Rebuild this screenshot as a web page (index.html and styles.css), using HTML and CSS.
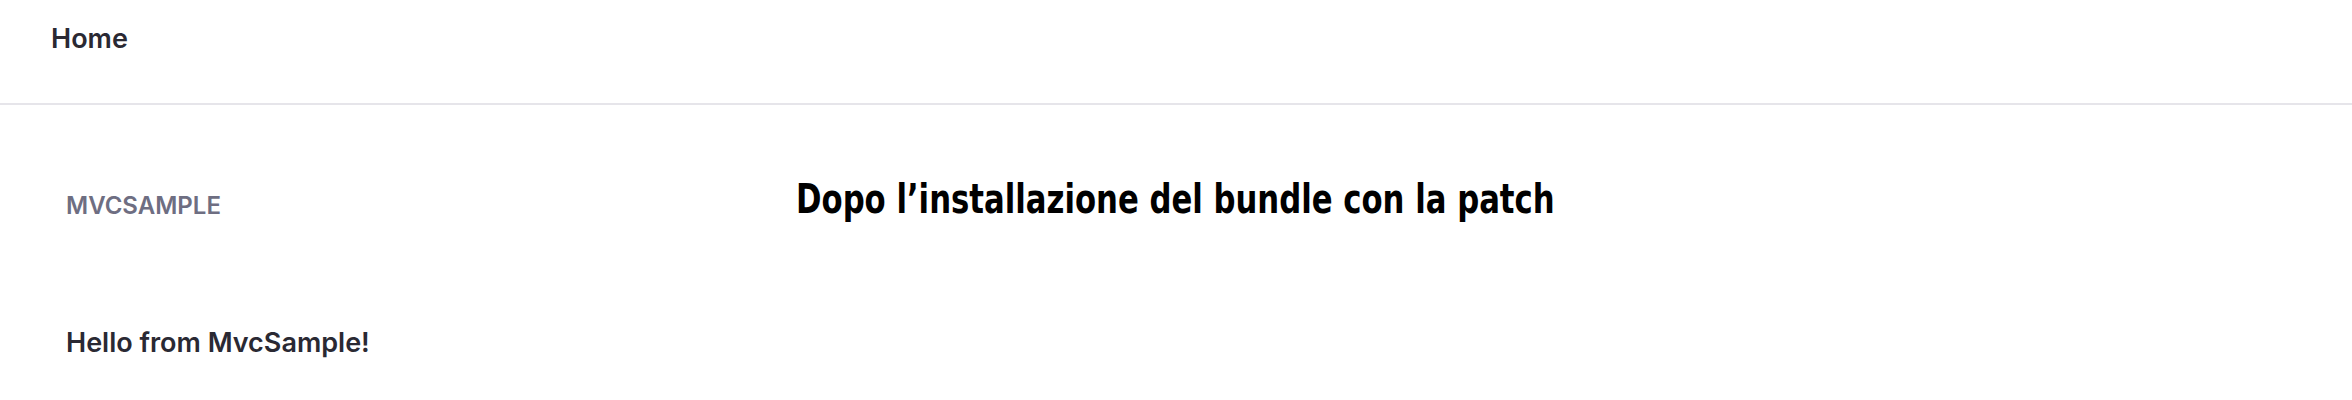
FILE: index.html
```html
<!DOCTYPE html>
<html>
<head>
<meta charset="utf-8">
<link rel="stylesheet" href="styles.css">
</head>
<body>
<header class="topbar">
  <nav class="nav"><a class="nav-link" href="#">Home</a></nav>
</header>
<div class="layout">
  <aside class="sidebar">
    <div class="brand">MVCSAMPLE</div>
    <p class="hello">Hello from MvcSample!</p>
  </aside>
  <main class="main">
    <h1 class="title">Dopo l’installazione del bundle con la patch</h1>
  </main>
</div>
</body>
</html>
```
FILE: styles.css
```css
html, body {
  margin: 0;
  padding: 0;
  background: #ffffff;
}
body {
  font-family: Inter, "Liberation Sans", sans-serif;
  color: #27272f;
}
.topbar {
  height: 103px;
  border-bottom: 2px solid #e6e5ea;
  display: flex;
  align-items: flex-start;
  padding: 0 0 0 51px;
}
.nav {
  padding-top: 21px;
}
.nav-link {
  font-size: 27px;
  font-weight: 600;
  color: #2a2933;
  text-decoration: none;
  line-height: 36px;
}
.layout {
  display: flex;
}
.sidebar {
  width: 730px;
  padding-left: 66px;
  flex: none;
}
.brand {
  margin-top: 86px;
  font-size: 24px;
  font-weight: 600;
  color: #6e6e82;
  line-height: 30px;
}
.hello {
  margin: 104px 0 0;
  font-size: 27px;
  font-weight: 600;
  color: #2a2933;
  line-height: 36px;
}
.main {
  flex: 1;
}
.title {
  margin: 64px 0 0;
  font-family: "DejaVu Sans Condensed", "DejaVu Sans", sans-serif;
  font-stretch: condensed;
  font-size: 41px;
  font-weight: 700;
  color: #000;
  line-height: 60px;
  transform: scaleX(0.833);
  transform-origin: left center;
  white-space: nowrap;
}
```
